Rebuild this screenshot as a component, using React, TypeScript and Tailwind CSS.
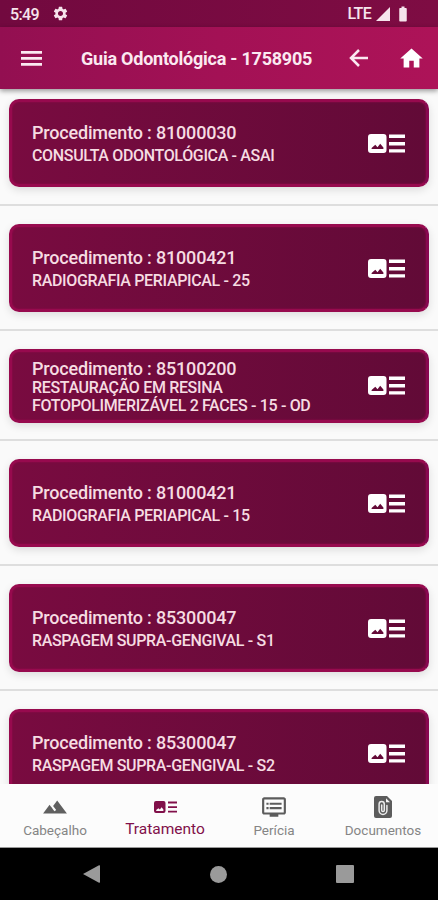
import React from 'react';
import { MdBatteryFull, MdDvr, MdHome, MdLandscape, MdSettings } from 'react-icons/md';

interface Procedure {
  code: string;
  lines: string[];
}

const procedures: Procedure[] = [
  { code: '81000030', lines: ['CONSULTA ODONTOLÓGICA - ASAI'] },
  { code: '81000421', lines: ['RADIOGRAFIA PERIAPICAL - 25'] },
  { code: '85100200', lines: ['RESTAURAÇÃO EM RESINA', 'FOTOPOLIMERIZÁVEL 2 FACES - 15 - OD'] },
  { code: '81000421', lines: ['RADIOGRAFIA PERIAPICAL - 15'] },
  { code: '85300047', lines: ['RASPAGEM SUPRA-GENGIVAL - S1'] },
  { code: '85300047', lines: ['RASPAGEM SUPRA-GENGIVAL - S2'] },
];

const MenuIcon = () => (
  <svg viewBox="0 0 21 15" className="h-[15px] w-[21px]" fill="currentColor">
    <path d="M0 0h21v2.8H0zM0 6h21v2.8H0zM0 12h21v2.8H0z" />
  </svg>
);

const BackIcon = () => (
  <svg viewBox="0 0 19 18" className="ml-auto h-[18px] w-[19px]" fill="none" stroke="currentColor" strokeWidth="2.5">
    <path d="M19 9H2M10 1 2 9l8 8" />
  </svg>
);

const SignalIcon = () => (
  <svg viewBox="0 0 14 14" className="ml-[5px] h-[14px] w-[14px]" fill="currentColor">
    <path d="M14 0v14H0z" />
  </svg>
);

const TrackIcon: React.FC<{ className?: string }> = ({ className }) => (
  <svg viewBox="0 0 37 19" className={className} fill="currentColor">
    <path
      fillRule="evenodd"
      d="M3 0h12.5a3 3 0 0 1 3 3v13a3 3 0 0 1-3 3H3a3 3 0 0 1-3-3V3a3 3 0 0 1 3-3zM3.6 15h11.8v-1.4l-3.2-3.8-2.7 3.4-2.2-2.5-3.7 3.3z"
    />
    <path d="M21 .6h16V4H21zM21 7.9h16v3.6H21zM21 15.2h16v3.4H21z" />
  </svg>
);

const TrackSmallIcon = () => (
  <svg viewBox="0 0 23 12" className="h-3 w-[23px]" fill="currentColor">
    <path
      fillRule="evenodd"
      d="M2 0h7.5a2 2 0 0 1 2 2v8a2 2 0 0 1-2 2H2a2 2 0 0 1-2-2V2a2 2 0 0 1 2-2zM2.2 10h7.2V8.6L7.6 6.3 5.9 8.4 4.4 7.2 2.2 9z"
    />
    <path d="M14 .6h9v1.8h-9zM14 5.2h9V7h-9zM14 9.8h9v1.8h-9z" />
  </svg>
);

const AttachmentIcon = () => (
  <svg viewBox="0 0 18 22" className="h-[22px] w-[18px]">
    <path d="M2 0h11l5 5v15a2 2 0 0 1-2 2H2a2 2 0 0 1-2-2V2a2 2 0 0 1 2-2z" fill="#5c5c5c" />
    <path d="M12 2.2v4h4z" fill="#f5f5f5" />
    <path
      d="M12.9 9.5v5a3.9 3.9 0 0 1-7.8 0V8.2a2.6 2.6 0 0 1 5.2 0v6a1.3 1.3 0 0 1-2.6 0V9"
      fill="none"
      stroke="#ececec"
      strokeWidth="1.5"
      strokeLinecap="round"
    />
  </svg>
);

const StatusBar = () => (
  <div className="flex h-[27px] items-center bg-gradient-to-r from-[#72093f] to-[#7e0c43] pl-[10px] pr-[26px] text-[#f6e4ec]">
    <span className="w-[42px] pt-[2px] text-[16px] font-medium tracking-[-0.6px]">5:49</span>
    <MdSettings size={17} />
    <span className="ml-auto pt-px text-[16px] font-medium tracking-[-0.7px]">LTE</span>
    <SignalIcon />
    <MdBatteryFull size={18} className="ml-[4px]" />
  </div>
);

const AppBar = () => (
  <div className="relative z-10 flex h-[62px] items-center bg-gradient-to-r from-[#930f51] via-[#a31155] to-[#ad1358] pl-[21px] pr-[13px] text-[#fbe9f1] shadow-[0_2px_5px_rgba(0,0,0,0.4)]">
    <MenuIcon />
    <h1 className="ml-[39px] whitespace-nowrap text-[18px] font-bold tracking-[-0.23px]">
      Guia Odontológica - 1758905
    </h1>
    <BackIcon />
    <MdHome size={27} className="ml-[30px] text-white" />
  </div>
);

const ProcedureItem: React.FC<{ item: Procedure }> = ({ item }) => {
  const tall = item.lines.length > 1;

  return (
    <li className={`border-b-2 border-[#dedede] px-[9px] pt-[18px] first:pt-[10px] ${tall ? 'pb-[16px]' : 'pb-[17px]'}`}>
      <div
        className={`flex items-center justify-between rounded-[10px] border-[3px] border-[#970a4e] border-r-[#870850] bg-gradient-to-r from-[#790b40] to-[#620a37] pl-[20px] pr-[21px] text-[#f6dce2] shadow-[0_3px_8px_rgba(0,0,0,0.12),inset_0_0_2px_#970a4e] ${
          tall ? 'h-[74px]' : 'h-[88px]'
        }`}
      >
        <div className={`whitespace-nowrap ${tall ? 'pt-px' : 'pt-[2px]'}`}>
          <p className={`text-[18px] font-medium tracking-[-0.18px] ${tall ? 'leading-[20px]' : 'leading-[24px]'}`}>
            Procedimento : {item.code}
          </p>
          {item.lines.map((line) => (
            <p key={line} className={`text-[16px] font-medium tracking-[-0.34px] ${tall ? 'leading-[18px]' : 'leading-[22px]'}`}>
              {line}
            </p>
          ))}
        </div>
        <TrackIcon className={`h-[19px] w-[37px] text-white ${tall ? '-mt-px' : ''}`} />
      </div>
    </li>
  );
};

const BottomTabs = () => (
  <nav className="flex h-[64px] shrink-0 border-b border-[#999] bg-[#fcfcfc] text-[13.5px] text-[#858585]">
    <button className="flex w-[110px] flex-col items-center">
      <span className="flex h-[46px] w-full items-center justify-center text-[#606060]">
        <MdLandscape size={26} />
      </span>
      <span className="-mt-[9px] leading-[18px]">Cabeçalho</span>
    </button>
    <button className="flex w-[110px] flex-col items-center text-[#81104a]">
      <span className="flex h-[46px] items-center justify-center">
        <TrackSmallIcon />
      </span>
      <span className="-mt-[10px] text-[15.5px] leading-[18px]">Tratamento</span>
    </button>
    <button className="flex w-[108px] flex-col items-center">
      <span className="flex h-[46px] items-center justify-center text-[#5c5c5c]">
        <MdDvr size={26} />
      </span>
      <span className="-mt-[9px] leading-[18px]">Perícia</span>
    </button>
    <button className="flex w-[110px] flex-col items-center">
      <span className="flex h-[46px] items-center justify-center">
        <AttachmentIcon />
      </span>
      <span className="-mt-[9px] leading-[18px]">Documentos</span>
    </button>
  </nav>
);

const SystemBar = () => (
  <div className="flex h-[52px] shrink-0 items-center justify-between bg-black pl-[83px] pr-[84px] text-[#9a9a9a]">
    <svg viewBox="0 0 17 18" className="h-[18px] w-[17px]" fill="currentColor">
      <path d="M0 9 16 0.3Q17 0 17 1v16q0 1-1 .7z" />
    </svg>
    <span className="h-[17px] w-[17px] rounded-full bg-[#9a9a9a]" />
    <span className="h-[18px] w-[18px] rounded-[1px] bg-[#9a9a9a]" />
  </div>
);

const App: React.FC = () => {
  return (
    <div className="flex h-[900px] w-[438px] flex-col overflow-hidden bg-[#fafafa] font-['Roboto',sans-serif]">
      <StatusBar />
      <AppBar />
      <ul className="min-h-0 flex-1 overflow-hidden">
        {procedures.map((item, index) => (
          <ProcedureItem key={index} item={item} />
        ))}
      </ul>
      <BottomTabs />
      <SystemBar />
    </div>
  );
};

export default App;
